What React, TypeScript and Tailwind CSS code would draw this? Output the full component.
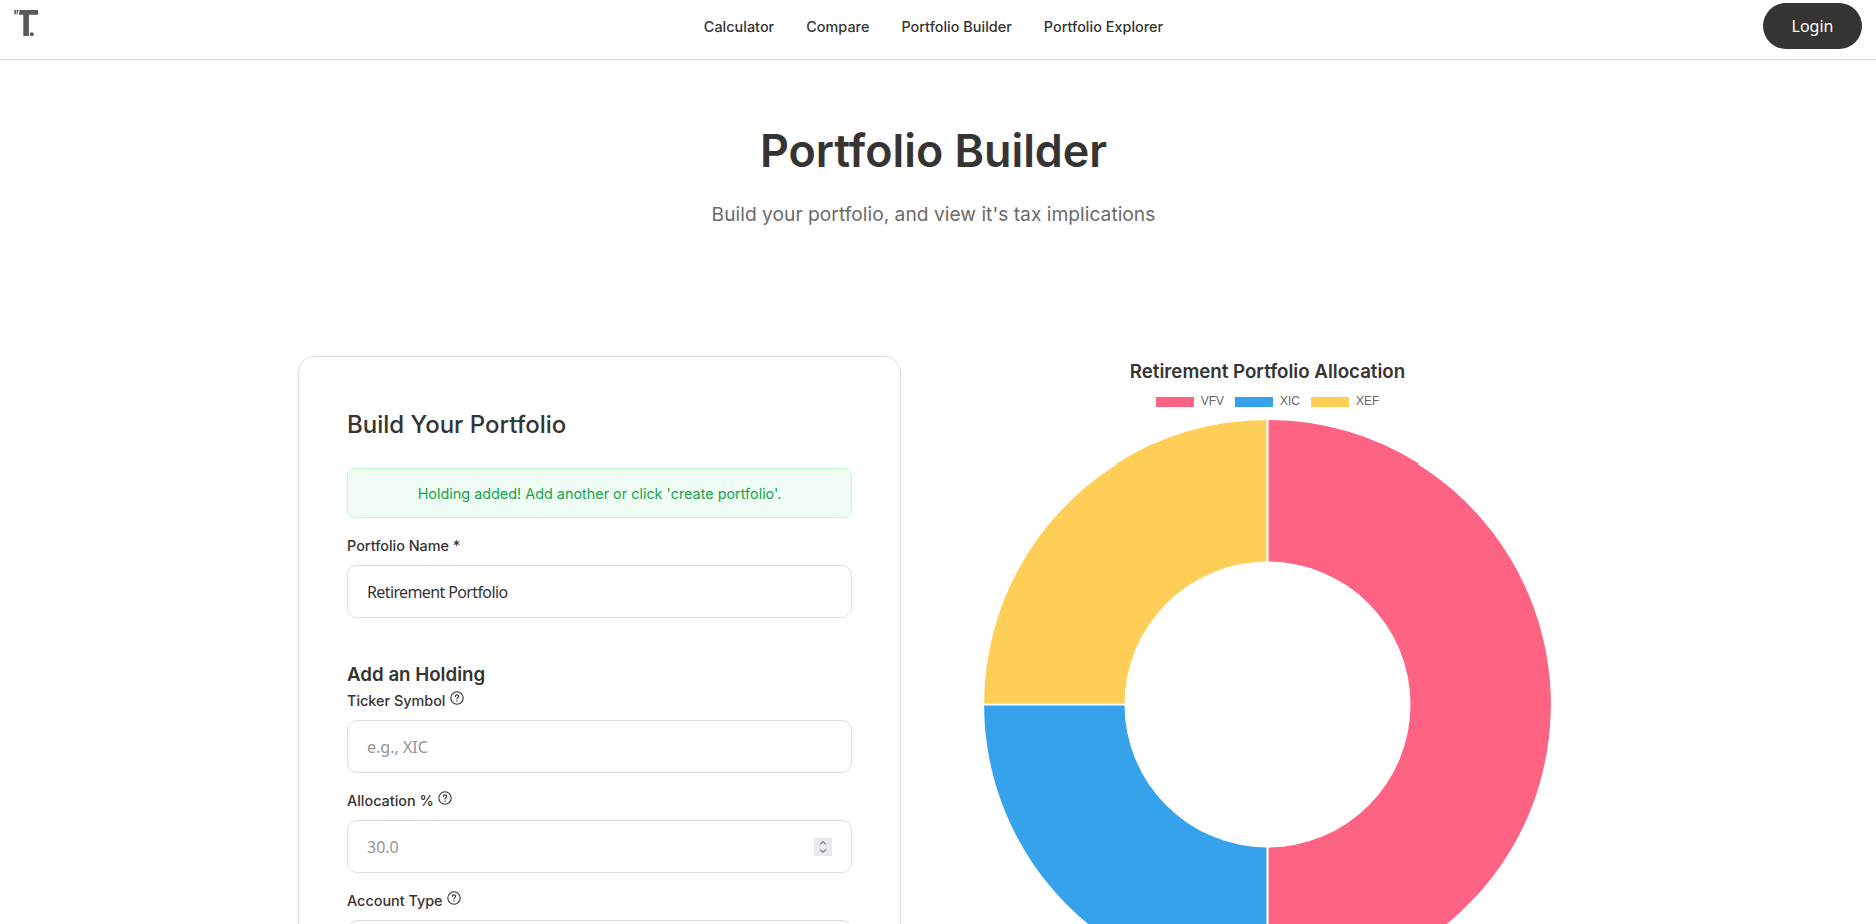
import React from "react";

const nav = ["Calculator", "Compare", "Portfolio Builder", "Portfolio Explorer"];

const legend = [
  { name: "VFV", color: "#ff6384" },
  { name: "XIC", color: "#36a2eb" },
  { name: "XEF", color: "#ffce56" },
];

function Logo() {
  return (
    <svg width="40" height="40" viewBox="0 0 40 40" fill="#58595b">
      <rect width="40" height="40" fill="#fdfefe" />
      <path d="M11.5 7H30v4.700h-9.100V33h-5.600V11.700h-4.500z" />
      <path d="M6.200 7h2.200L7.600 11.500H6.400zM9 7h1.600L9.200 11.500H8.400z" />
      <circle cx="23.8" cy="31.3" r="2" />
    </svg>
  );
}

function HelpIcon() {
  return (
    <svg className="ml-[4.6px]" width="14" height="14" viewBox="0 0 14 14" fill="none" stroke="#353432" strokeWidth="1.1" strokeLinecap="round">
      <circle cx="7" cy="7" r="6.2" />
      <path d="M5.400 5.500c0-1 .7-1.600 1.600-1.600s1.600.6 1.600 1.500C8.600 6.500 7 6.700 7 7.900" />
      <path d="M7 10v.1" strokeWidth="1.4" />
    </svg>
  );
}

function Label({ children, help }: { children: React.ReactNode; help?: boolean }) {
  return (
    <label className="flex h-5 items-start text-[14.4px] leading-5 font-medium text-[#353432]">
      <span>{children}</span>
      {help && <HelpIcon />}
    </label>
  );
}

function Field({ children, muted }: { children?: React.ReactNode; muted?: boolean }) {
  return (
    <div
      className={`flex h-[53px] items-center justify-between rounded-[10px] border border-[#dedede] bg-white px-[19px] font-['Noto_Sans',sans-serif] text-[16px] ${
        muted ? "text-[#959493]" : "tracking-[-0.62px] text-[#353432]"
      }`}
    >
      {children}
    </div>
  );
}

function Stepper() {
  return (
    <svg width="18" height="18" viewBox="0 0 18 18" fill="none" stroke="#9090a0" strokeWidth="1.6">
      <rect width="18" height="18" fill="#e9e9ed" stroke="none" />
      <path d="M5.800 6.500 9 3.800l3.200 2.700M5.800 11.500 9 14.200l3.200-2.700" />
    </svg>
  );
}

function Donut() {
  return (
    <svg className="block" width="570" height="570" viewBox="-284.5 -284.5 570 570">
      <path fill="#ff6384" d="M0-284.500A284.500 284.500 0 0 1 151.500-240.800L150.700-240A283.400 283.400 0 0 1 0 283.400V143A143 143 0 0 0 0-143Z" />
      <path fill="#36a2eb" d="M0 283.400A283.400 283.400 0 0 1-283.400 0H-143A143 143 0 0 0 0 143Z" />
      <path fill="#ffce56" d="M-283.400 0A283.400 283.400 0 0 1-150.700-240L-151.500-240.800A284.500 284.500 0 0 1 0-284.500V-143A143 143 0 0 0-143 0Z" />
      <path stroke="#fff" strokeWidth="2.2" d="M0-285V-142M0 142V285M-285 0H-142" />
    </svg>
  );
}

export default function App() {
  return (
    <div className="h-[924px] w-[1876px] overflow-hidden bg-white font-['Inter',sans-serif] text-[#353432]">
      <header className="grid h-[60px] grid-cols-[200px_1fr_200px] items-start border-b border-[#dedede] pt-[3px] pr-[14px] pl-2">
        <Logo />
        <nav className="flex h-[46px] items-center justify-center gap-8 pt-px pr-[3px] text-[14.4px] font-medium tracking-[0.025px]">
          {nav.map((n) => (
            <a key={n} href="#">{n}</a>
          ))}
        </nav>
        <button className="h-[46px] w-[99px] justify-self-end rounded-full bg-[#353432] font-['Noto_Sans',sans-serif] text-[16px] text-white">Login</button>
      </header>
      <main className="w-[1867px]">
        <section className="flex flex-col items-center pt-[62px]">
          <h1 className="text-[44.8px] leading-[58px] font-semibold">Portfolio Builder</h1>
          <p className="mt-5 text-[19.2px] leading-[28px] tracking-[0.02px] text-[#6b6a69]">Build your portfolio, and view it's tax implications</p>
        </section>
        <section className="mx-auto mt-[128px] grid w-[1271px] grid-cols-[603px_603px] items-start gap-[65px]">
          <form className="h-[900px] rounded-[16px] border border-[#dedede] px-12 pt-[51px]">
            <h2 className="text-[24px] leading-[34px] font-medium">Build Your Portfolio</h2>
            <div className="mt-[26px] flex h-[50px] items-center justify-center rounded-lg border border-[#b9f8cf] bg-[#f0fdf4] pt-px text-[14.4px] leading-5 text-[#16a34a]">
              Holding added! Add another or click 'create portfolio'.
            </div>
            <div className="mt-[18px] flex flex-col gap-[9px]">
              <Label>Portfolio Name *</Label>
              <Field>Retirement Portfolio</Field>
            </div>
            <h3 className="mt-[42px] text-[18.72px] leading-[30px] font-semibold">Add an Holding</h3>
            <div className="mt-px flex flex-col gap-[18px]">
              <div className="flex flex-col gap-[9px]">
                <Label help>Ticker Symbol</Label>
                <Field muted>e.g., XIC</Field>
              </div>
              <div className="flex flex-col gap-[9px]">
                <Label help>Allocation %</Label>
                <Field muted><span>30.0</span><Stepper /></Field>
              </div>
              <div className="flex flex-col gap-[9px]">
                <Label help>Account Type</Label>
                <Field />
              </div>
            </div>
          </form>
          <div className="flex flex-col items-center">
            <h3 className="mt-[2px] text-[18.72px] leading-[28px] font-semibold">Retirement Portfolio Allocation</h3>
            <div className="mt-[8px] flex h-[14px] items-center gap-[11px] font-['Liberation_Sans',sans-serif] text-[12px] leading-[14px] text-[#666]">
              {legend.map((l) => (
                <div key={l.name} className="flex items-center gap-[7px]">
                  <span className="mt-[2px] h-[10px] w-[38px]" style={{ backgroundColor: l.color }} />
                  <span>{l.name}</span>
                </div>
              ))}
            </div>
            <div className="mt-[12px]"><Donut /></div>
          </div>
        </section>
      </main>
    </div>
  );
}
